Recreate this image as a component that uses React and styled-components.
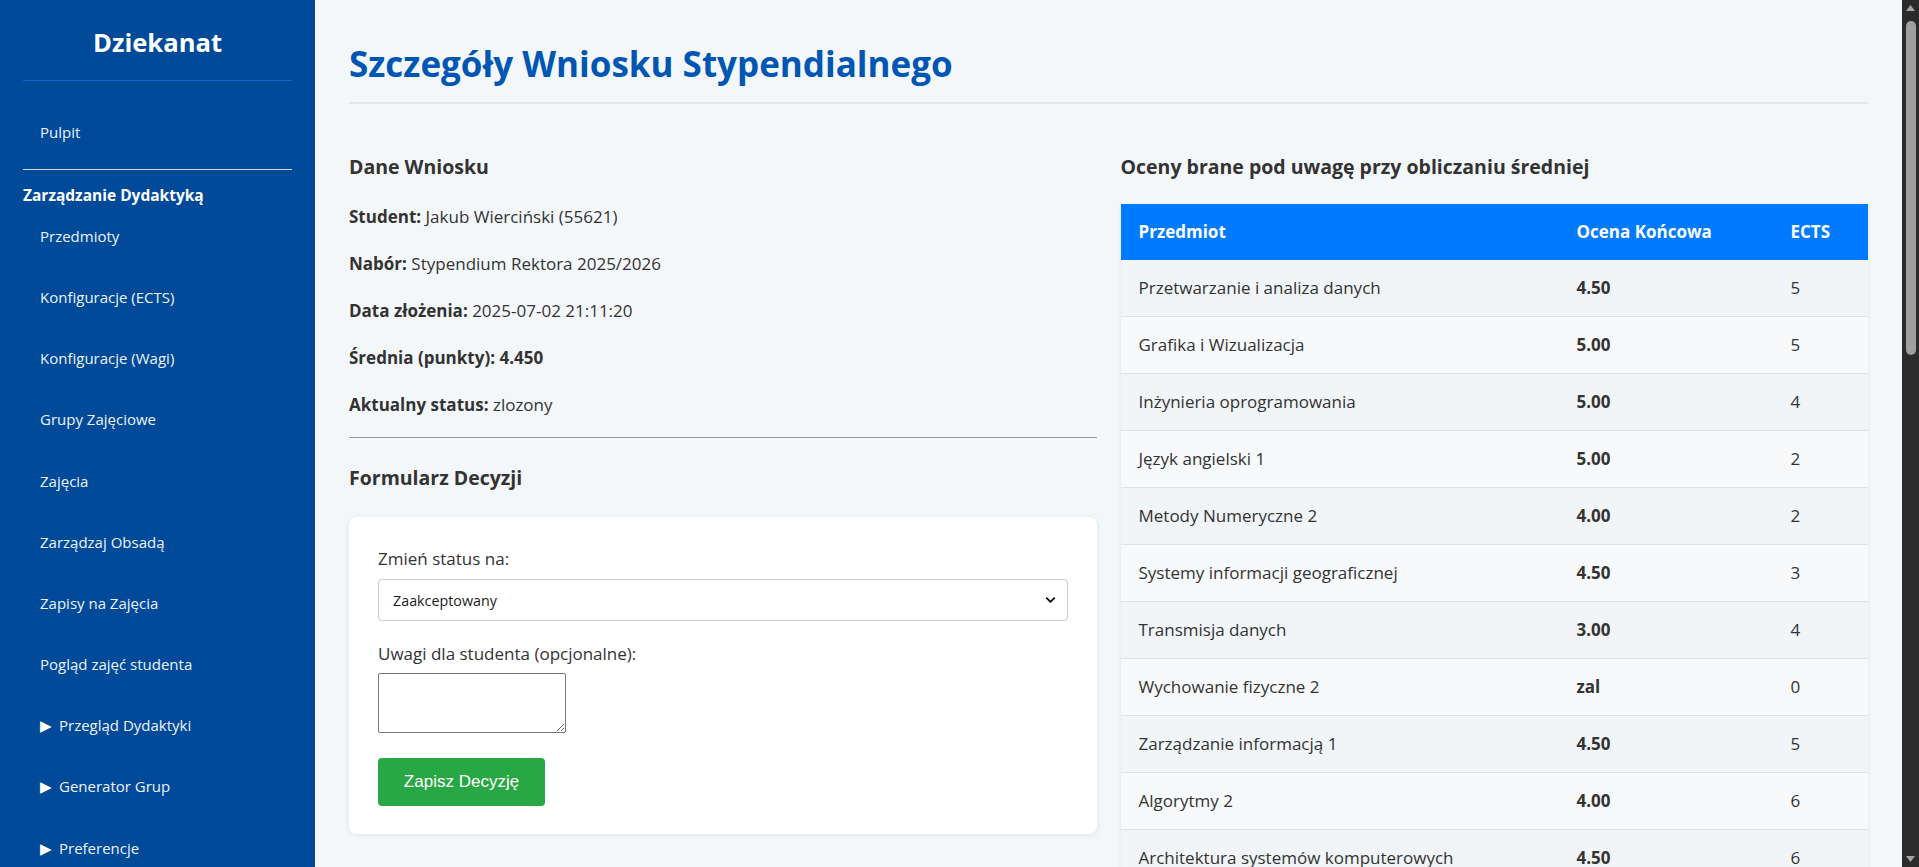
import React from "react";
import styled, { createGlobalStyle } from "styled-components";
import { ChevronDown } from "lucide-react";

const FONT = `"Open Sans", "Noto Sans", "Liberation Sans", sans-serif`;

const GlobalStyle = createGlobalStyle`
  html, body { margin: 0; padding: 0; height: 100%; overflow: hidden; }
  body {
    font-family: ${FONT};
    background: #f4f7fa;
    color: #333;
  }
  * { box-sizing: border-box; }
`;

const Frame = styled.div`
  display: flex;
  height: 100vh;
`;

const Viewport = styled.div`
  flex: 1;
  min-width: 0;
  overflow-y: auto;
  scrollbar-width: none;
  &::-webkit-scrollbar { display: none; }
`;

const ScrollRail = styled.div`
  width: 17px;
  flex-shrink: 0;
  background: #2b2b2b;
  display: flex;
  flex-direction: column;
  align-items: center;
`;

const RailArrow = styled.div`
  height: ${(p) => p.$h}px;
  display: flex;
  align-items: ${(p) => (p.$down ? "flex-end" : "flex-start")};
  padding: ${(p) => (p.$down ? "0 0 5px" : "5px 0 0")};
  color: #a3a3a3;
`;

const RailThumb = styled.div`
  width: 10px;
  height: 334px;
  border-radius: 5px;
  background: #9f9f9f;
`;

const RailSpacer = styled.div`
  flex: 1;
`;

const Layout = styled.div`
  display: flex;
  min-height: 100%;
`;

const Sidebar = styled.aside`
  width: 315px;
  flex-shrink: 0;
  background: #004a99;
  color: #f2f4f8;
  padding: 0 23px;
`;

const Brand = styled.h2`
  margin: 0;
  padding: 28px 0 22px;
  text-align: center;
  font-size: 25.6px;
  line-height: 30px;
  font-weight: 700;
  color: #fff;
  border-bottom: 1px solid #1c62c4;
`;

const NavList = styled.nav`
  display: flex;
  flex-direction: column;
  margin-top: 20px;
`;

const NavItem = styled.a`
  display: block;
  padding: 18.6px 17px;
  font-size: 15px;
  line-height: 24px;
  color: #eef2f8;
  text-decoration: none;
`;

const Arrow = styled.span`
  display: inline-block;
  width: 19px;
  font-size: 15px;
  color: #fff;
`;

const NavSeparator = styled.hr`
  margin: 7px 0 0;
  border: 0;
  border-top: 1px solid #d4d6da;
`;

const NavGroupTitle = styled.div`
  margin-top: 15px;
  font-size: 15.5px;
  line-height: 20px;
  font-weight: 700;
  color: #fff;
`;

const Main = styled.main`
  flex: 1;
  min-width: 0;
  padding: 34px;
`;

const PageTitle = styled.h1`
  margin: 8px 0 0;
  padding-bottom: 17px;
  font-size: 35px;
  line-height: 43px;
  font-weight: 700;
  color: #0056b3;
  border-bottom: 2px solid #e2e6ea;
`;

const Columns = styled.div`
  display: grid;
  grid-template-columns: 1fr 1fr;
  gap: 24px;
  margin-top: 51px;
  align-items: start;
`;

const Column = styled.section`
  display: flex;
  flex-direction: column;
`;

const SectionTitle = styled.h3`
  margin: 0;
  font-size: 19.5px;
  line-height: 23px;
  font-weight: 700;
  color: #333;
`;

const InfoList = styled.div`
  display: flex;
  flex-direction: column;
  gap: 23px;
  margin-top: 27px;
`;

const InfoLine = styled.p`
  margin: 0;
  font-size: 17px;
  line-height: 24px;
  color: #333;
  strong { font-weight: 700; }
`;

const Divider = styled.hr`
  margin: 20px 0 28px;
  border: 0;
  border-top: 1px solid #9a9a9a;
`;

const Card = styled.form`
  margin-top: 28px;
  background: #fff;
  border-radius: 8px;
  box-shadow: 0 1px 6px rgba(0, 0, 0, 0.08);
  padding: 30px 29px 28px;
  display: flex;
  flex-direction: column;
`;

const FieldLabel = styled.label`
  font-size: 17px;
  line-height: 24px;
  color: #333;
  margin-bottom: ${(p) => p.$gap}px;
`;

const SelectWrap = styled.div`
  position: relative;
  margin-bottom: 21px;
  svg {
    position: absolute;
    right: 10px;
    top: 50%;
    transform: translateY(-50%);
    pointer-events: none;
    color: #111;
  }
`;

const Select = styled.select`
  appearance: none;
  -webkit-appearance: none;
  width: 100%;
  height: 42px;
  padding: 0 14px;
  font-family: ${FONT};
  font-size: 14.3px;
  color: #222;
  background: #fff;
  border: 1px solid #ccc;
  border-radius: 4px;
`;

const TextArea = styled.textarea`
  width: 188px;
  height: 60px;
  border: 1px solid #767676;
  border-radius: 2px;
  background: #fff;
  margin: 0 0 25px;
  font-family: "Liberation Mono", monospace;
  font-size: 13px;
`;

const SubmitButton = styled.button`
  align-self: flex-start;
  width: 167px;
  height: 48px;
  border: 0;
  border-radius: 4px;
  background: #28a745;
  color: #fff;
  font-family: "Liberation Sans", Arial, sans-serif;
  font-size: 17px;
  cursor: pointer;
`;

const Table = styled.table`
  margin-top: 26px;
  width: 100%;
  table-layout: fixed;
  border-collapse: collapse;
  box-shadow: 0 1px 4px rgba(0, 0, 0, 0.07);
`;

const HeadCell = styled.th`
  background: #007bff;
  color: #fff;
  text-align: left;
  font-size: 17px;
  line-height: 24px;
  font-weight: 700;
  padding: 16px 18px;
`;

const Row = styled.tr`
  background: ${(p) => (p.$odd ? "#f2f5f8" : "#f8f9fb")};
  border-bottom: 1px solid #dee2e6;
`;

const Cell = styled.td`
  font-size: 17px;
  line-height: 24px;
  padding: 16px 18px;
  color: #333;
  font-weight: ${(p) => (p.$bold ? 700 : 400)};
`;

const grades = [
  ["Przetwarzanie i analiza danych", "4.50", 5],
  ["Grafika i Wizualizacja", "5.00", 5],
  ["Inżynieria oprogramowania", "5.00", 4],
  ["Język angielski 1", "5.00", 2],
  ["Metody Numeryczne 2", "4.00", 2],
  ["Systemy informacji geograficznej", "4.50", 3],
  ["Transmisja danych", "3.00", 4],
  ["Wychowanie fizyczne 2", "zal", 0],
  ["Zarządzanie informacją 1", "4.50", 5],
  ["Algorytmy 2", "4.00", 6],
  ["Architektura systemów komputerowych", "4.50", 6],
];

const navItems = [
  "Przedmioty",
  "Konfiguracje (ECTS)",
  "Konfiguracje (Wagi)",
  "Grupy Zajęciowe",
  "Zajęcia",
  "Zarządzaj Obsadą",
  "Zapisy na Zajęcia",
  "Pogląd zajęć studenta",
];

const collapsibles = ["Przegląd Dydaktyki", "Generator Grup", "Preferencje"];

function Triangle({ down }) {
  return (
    <svg width="9" height="6" viewBox="0 0 9 6" fill="currentColor">
      {down ? <polygon points="0,0 9,0 4.5,6" /> : <polygon points="4.5,0 9,6 0,6" />}
    </svg>
  );
}

export default function App() {
  return (
    <>
      <GlobalStyle />
      <Frame>
        <Viewport>
          <Layout>
            <Sidebar>
              <Brand>Dziekanat</Brand>
              <NavList>
                <NavItem href="#">Pulpit</NavItem>
                <NavSeparator />
                <NavGroupTitle>Zarządzanie Dydaktyką</NavGroupTitle>
                {navItems.map((n) => (
                  <NavItem key={n} href="#">
                    {n}
                  </NavItem>
                ))}
                {collapsibles.map((n) => (
                  <NavItem key={n} href="#">
                    <Arrow>▶</Arrow>
                    {n}
                  </NavItem>
                ))}
              </NavList>
            </Sidebar>
            <Main>
              <PageTitle>Szczegóły Wniosku Stypendialnego</PageTitle>
              <Columns>
                <Column>
                  <SectionTitle>Dane Wniosku</SectionTitle>
                  <InfoList>
                    <InfoLine>
                      <strong>Student:</strong> Jakub Wierciński (55621)
                    </InfoLine>
                    <InfoLine>
                      <strong>Nabór:</strong> Stypendium Rektora 2025/2026
                    </InfoLine>
                    <InfoLine>
                      <strong>Data złożenia:</strong> 2025-07-02 21:11:20
                    </InfoLine>
                    <InfoLine>
                      <strong>Średnia (punkty): 4.450</strong>
                    </InfoLine>
                    <InfoLine>
                      <strong>Aktualny status:</strong> zlozony
                    </InfoLine>
                  </InfoList>
                  <Divider />
                  <SectionTitle>Formularz Decyzji</SectionTitle>
                  <Card onSubmit={(e) => e.preventDefault()}>
                    <FieldLabel $gap={8} htmlFor="status">
                      Zmień status na:
                    </FieldLabel>
                    <SelectWrap>
                      <Select id="status" defaultValue="zaakceptowany">
                        <option value="zaakceptowany">Zaakceptowany</option>
                        <option value="odrzucony">Odrzucony</option>
                        <option value="zlozony">Złożony</option>
                      </Select>
                      <ChevronDown size={15} strokeWidth={3} />
                    </SelectWrap>
                    <FieldLabel $gap={7} htmlFor="uwagi">
                      Uwagi dla studenta (opcjonalne):
                    </FieldLabel>
                    <TextArea id="uwagi" />
                    <SubmitButton type="submit">Zapisz Decyzję</SubmitButton>
                  </Card>
                </Column>
                <Column>
                  <SectionTitle>Oceny brane pod uwagę przy obliczaniu średniej</SectionTitle>
                  <Table>
                    <colgroup>
                      <col style={{ width: "438px" }} />
                      <col style={{ width: "214px" }} />
                      <col />
                    </colgroup>
                    <thead>
                      <tr>
                        <HeadCell>Przedmiot</HeadCell>
                        <HeadCell>Ocena Końcowa</HeadCell>
                        <HeadCell>ECTS</HeadCell>
                      </tr>
                    </thead>
                    <tbody>
                      {grades.map(([name, grade, ects], i) => (
                        <Row key={name} $odd={i % 2 === 0}>
                          <Cell>{name}</Cell>
                          <Cell $bold>{grade}</Cell>
                          <Cell>{ects}</Cell>
                        </Row>
                      ))}
                    </tbody>
                  </Table>
                </Column>
              </Columns>
            </Main>
          </Layout>
        </Viewport>
        <ScrollRail aria-hidden="true">
          <RailArrow $h={21}>
            <Triangle />
          </RailArrow>
          <RailThumb />
          <RailSpacer />
          <RailArrow $h={17} $down>
            <Triangle down />
          </RailArrow>
        </ScrollRail>
      </Frame>
    </>
  );
}
